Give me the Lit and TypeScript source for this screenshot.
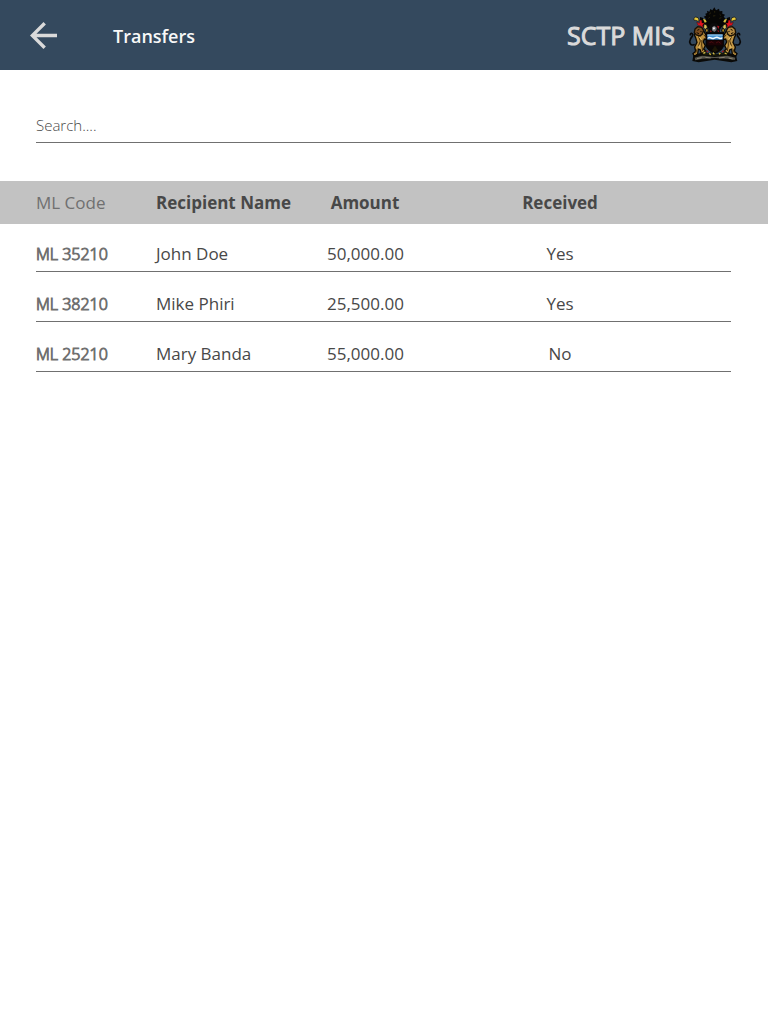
import { LitElement, html, css, svg } from "lit";
import { customElement, property, state } from "lit/decorators.js";

interface Transfer {
  code: string;
  name: string;
  amount: string;
  received: boolean;
}

const TRANSFERS: Transfer[] = [
  { code: "ML 35210", name: "John Doe", amount: "50,000.00", received: true },
  { code: "ML 38210", name: "Mike Phiri", amount: "25,500.00", received: true },
  { code: "ML 25210", name: "Mary Banda", amount: "55,000.00", received: false },
];

@customElement("coat-of-arms")
export class CoatOfArms extends LitElement {
  static styles = css`
    :host {
      display: block;
      line-height: 0;
    }
    .emblem {
      width: 54px;
      height: 56px;
    }
  `;

  // One supporter with its side of the mantling; drawn twice, the second mirrored.
  private side(body: string, mane: string) {
    return svg`
      <path d="M42 134C32 138 26 128 31 118C34 110 39 111 38 103C36 98 31 99 31 104" fill="none" stroke="#080808" stroke-width="5" stroke-linecap="round"/>
      <path d="M49 91L60 86L72 94L77 104L84 112L82 119L73 117L70 126L76 137L71 147L78 154L77 162L64 160L61 150L55 147L53 162L43 169L39 161L47 154L44 141L51 127L47 113L43 104Z" fill="${body}" stroke="#0b0803" stroke-width="4"/>
      <path d="M55 108L61 123L55 139M66 119L65 135L68 153M50 148L47 160M71 104L78 112" fill="none" stroke="#4a3009" stroke-width="3"/>
      <path d="M57 110L65 119M58 136L57 145" stroke="#e8c570" stroke-width="3"/>
      <path d="M45 87L53 80L65 82L71 91L67 102L60 108L49 105L43 98Z" fill="${mane}" stroke="#171005" stroke-width="4"/>
      <path d="M52 91L58 88M61 94L65 95M50 98L57 101" stroke="#130c04" stroke-width="3"/>
      <path d="M41 56L47 51L54 53L58 62L53 63L47 61L43 61Z" fill="#e6c83c" stroke="#0c0c08" stroke-width="2"/>
      <path d="M60 51L68 53L77 64L81 78L74 84L66 77L60 66Z" fill="#070605"/>
      <path d="M50 66L58 70L60 60L65 61L66 69L73 69L68 76L69 83L61 77L54 76Z" fill="#e1121c" stroke="#260405" stroke-width="1"/>
      <path d="M69 56L77 59L80 66L74 68Z" fill="#d9bd3b"/>
      <path d="M72 72L80 75L82 82L76 88L71 84Z" fill="#dcc25a" stroke="#090909" stroke-width="2"/>
      <path d="M76 89L83 84L85 94L79 98Z" fill="#b8932a" stroke="#090909" stroke-width="3"/>
    `;
  }

  render() {
    return html`
      <svg class="emblem" viewBox="24 21 162 168" role="img" aria-label="Coat of arms">
        <path d="M40 166L64 158L104 162L145 158L168 166L172 183L154 187L104 179L56 187L37 183Z" fill="#0a0a08"/>
        <path d="M44 173L66 167L104 171L142 167L166 173L164 180L143 176L104 174L66 176L46 181Z" fill="#56544c"/>
        <path d="M51 176L65 173M76 172L92 174M117 174L134 172M146 174L158 177" stroke="#a69f88" stroke-width="2"/>
        <path d="M76 41L82 39L81 32L88 35L91 27L97 31L103 22L108 31L117 26L119 34L127 33L127 41L135 44L131 50L137 56L131 63L133 73L123 84L119 91L89 90L79 77L73 63L77 56L71 50L78 47Z" fill="#060605"/>
        <path d="M87 43L93 38M104 33L104 38M119 43L123 47M85 55L90 51M118 55L124 53M99 48L106 47" stroke="#29230c" stroke-width="3"/>
        ${this.side("#bd903e", "#7d4f20")}
        <g transform="translate(210 0) scale(-1 1)">${this.side("#c69a47", "#b58b42")}</g>
        <path d="M88 77L96 69L109 70L119 79L120 96L112 103L92 102L85 94Z" fill="#0b0b0b"/>
        <path d="M96 82L103 77L110 83L109 91L103 96L96 91Z" fill="#6f6f74"/>
        <path d="M98 84L103 81L105 86L101 89Z" fill="#f3f3f5"/>
        <path d="M111 77L118 79L115 87ZM91 91L95 94L91 99ZM112 91L117 92L115 98Z" fill="#b0121b"/>
        <path d="M78 98H131V137Q126 153 105 160Q83 153 78 137Z" fill="#0a0505" stroke="#050505" stroke-width="3"/>
        <path d="M82 104H128V119H82Z" fill="#438ed0"/>
        <path d="M82 103H128V107H82Z" fill="#8fc3ea"/>
        <path d="M83 113Q88 108 94 112Q99 115 105 111Q112 108 117 112Q122 115 127 111V116Q121 119 116 116Q110 112 104 116Q98 119 93 116Q87 113 83 117Z" fill="#f3f9fd"/>
        <path d="M82 122H128V136H82Z" fill="#1c0305"/>
        <path d="M88 128L96 125L101 130M108 129L115 125L122 130" fill="none" stroke="#4a0b10" stroke-width="3"/>
        <path d="M96 151L105 137L114 151L105 157Z" fill="#1c1606"/>
        <path d="M65 158L75 152L81 161L94 156L96 164L105 160L115 165L119 156L129 160L136 152L145 159L139 168L123 165L105 169L85 165L72 168Z" fill="#17190a"/>
        <path d="M70 160L76 157M88 160L92 164M99 158L103 163M117 163L121 159M134 159L140 162" stroke="#d8bd44" stroke-width="4"/>
        <path d="M80 152L84 156M126 156L131 152" stroke="#9e1420" stroke-width="4"/>
      </svg>
    `;
  }
}

@customElement("app-header")
export class AppHeader extends LitElement {
  @property() heading = "";

  static styles = css`
    :host {
      display: block;
    }
    .bar {
      display: flex;
      align-items: center;
      box-sizing: border-box;
      height: 70px;
      padding: 0 26px 0 30px;
      background: #34495e;
    }
    .back {
      display: flex;
      padding: 0;
      border: 0;
      background: none;
      color: #dadada;
      cursor: pointer;
    }
    .arrow {
      width: 27px;
      height: 27px;
    }
    .title,
    .brand {
      line-height: 32px;
      white-space: nowrap;
    }
    .title {
      flex: 1;
      margin: 0 0 0 56px;
      padding-top: 2px;
      color: #f8f8f8;
      font-size: 18px;
      font-weight: 600;
    }
    .brand {
      margin-right: 13px;
      color: #dadada;
      font-size: 25px;
      -webkit-text-stroke: 1px #dadada;
    }
  `;

  render() {
    return html`
      <header class="bar">
        <button class="back" type="button" aria-label="Back">
          <svg class="arrow" viewBox="4 4 16 16" fill="currentColor" aria-hidden="true">
            <path d="M20 11H7.83l5.59-5.59L12 4l-8 8 8 8 1.41-1.41L7.83 13H20v-2z" />
          </svg>
        </button>
        <h1 class="title">${this.heading}</h1>
        <span class="brand">SCTP MIS</span>
        <coat-of-arms></coat-of-arms>
      </header>
    `;
  }
}

@customElement("app-root")
export class AppRoot extends LitElement {
  @state() private query = "";

  static styles = css`
    :host {
      display: block;
      min-height: 100vh;
      background: #fff;
      font-family: "Open Sans", "Noto Sans", sans-serif;
      color: #484848;
    }
    .search {
      display: block;
      margin: 40px 37px 38px 36px;
    }
    .field {
      display: block;
      box-sizing: border-box;
      width: 100%;
      height: 33px;
      padding: 0 0 2px;
      border: 0;
      border-bottom: 1px solid #707070;
      border-radius: 0;
      outline: none;
      background: none;
      color: #484848;
      font-family: inherit;
      font-size: 15px;
      font-weight: 300;
    }
    .field::placeholder {
      color: #484848;
      opacity: 1;
    }
    .table,
    .head {
      display: block;
    }
    .body {
      display: grid;
      row-gap: 20px;
      padding: 18px 37px 0 36px;
    }
    .row {
      display: grid;
      grid-template-columns: 120fr 171fr 195fr 209fr;
      font-size: 17px;
      line-height: 24px;
      white-space: nowrap;
    }
    .head .row {
      align-items: center;
      height: 43px;
      padding: 0 37px 0 36px;
      background: #c2c2c2;
    }
    .body .row {
      padding-bottom: 5px;
      border-bottom: 1px solid #707070;
    }
    .cell {
      padding: 0;
      text-align: left;
      font-weight: 400;
    }
    .head .cell {
      font-weight: 700;
    }
    .code,
    .head .code {
      color: #707070;
      font-weight: 400;
    }
    .body .code {
      font-size: 16px;
      font-weight: 300;
      -webkit-text-stroke: 1px #707070;
    }
    .amount,
    .received {
      justify-self: start;
      width: 76px;
      text-align: center;
    }
  `;

  private onInput(event: Event) {
    this.query = (event.target as HTMLInputElement).value;
  }

  render() {
    const term = this.query.trim().toLowerCase();
    const rows = TRANSFERS.filter((t) => `${t.code} ${t.name}`.toLowerCase().includes(term));
    return html`
      <app-header heading="Transfers"></app-header>
      <main>
        <label class="search">
          <input class="field" type="text" aria-label="Search" placeholder="Search...." .value=${this.query} @input=${this.onInput} />
        </label>
        <table class="table">
          <thead class="head">
            <tr class="row">
              <th class="cell code" scope="col">ML Code</th>
              <th class="cell" scope="col">Recipient Name</th>
              <th class="cell amount" scope="col">Amount</th>
              <th class="cell received" scope="col">Received</th>
            </tr>
          </thead>
          <tbody class="body">
            ${rows.map(
              (t) => html`
                <tr class="row">
                  <th class="cell code" scope="row">${t.code}</th>
                  <td class="cell">${t.name}</td>
                  <td class="cell amount">${t.amount}</td>
                  <td class="cell received">${t.received ? "Yes" : "No"}</td>
                </tr>
              `
            )}
          </tbody>
        </table>
      </main>
    `;
  }
}
